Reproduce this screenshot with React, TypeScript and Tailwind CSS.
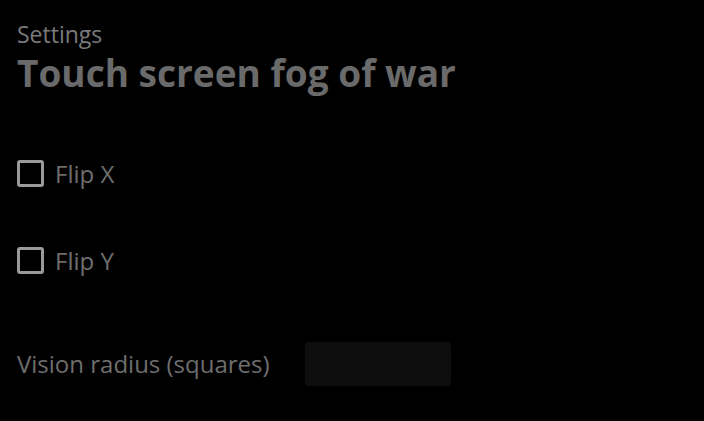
import React, { useState } from 'react';

const Checkbox: React.FC<{ label: string; checked: boolean; onToggle: () => void }> = ({ label, checked, onToggle }) => (
  <label className="flex items-center gap-[11px] cursor-pointer select-none">
    <span
      onClick={onToggle}
      className="w-[27px] h-[27px] rounded-[3px] border-[3px] border-[#9a9a9a] flex items-center justify-center"
    >
      {checked && <span className="w-[11px] h-[11px] bg-[#9a9a9a]" />}
    </span>
    <span className="text-[24px] text-[#6e6e6e] leading-none">{label}</span>
  </label>
);

const App: React.FC = () => {
  const [flipX, setFlipX] = useState(false);
  const [flipY, setFlipY] = useState(false);
  const [radius, setRadius] = useState('');

  return (
    <div className="w-[704px] h-[421px] bg-black px-[17px] pt-[19px] font-['Open_Sans',sans-serif]">
      <div className="text-[23px] leading-[30px] text-[#7a7a7a]">Settings</div>
      <h1 className="text-[37px] leading-[48px] font-bold text-[#6a6a6a]">Touch screen fog of war</h1>

      <div className="mt-[63px] flex flex-col gap-[60px]">
        <Checkbox label="Flip X" checked={flipX} onToggle={() => setFlipX(!flipX)} />
        <Checkbox label="Flip Y" checked={flipY} onToggle={() => setFlipY(!flipY)} />
      </div>

      <div className="mt-[68px] flex items-center gap-[35px]">
        <span className="text-[24px] text-[#6e6e6e]">Vision radius (squares)</span>
        <input
          value={radius}
          onChange={(e) => setRadius(e.target.value)}
          className="w-[146px] h-[44px] rounded-[4px] bg-[#0e0e0e] outline-none text-[#888] px-2"
        />
      </div>
    </div>
  );
};

export default App;
